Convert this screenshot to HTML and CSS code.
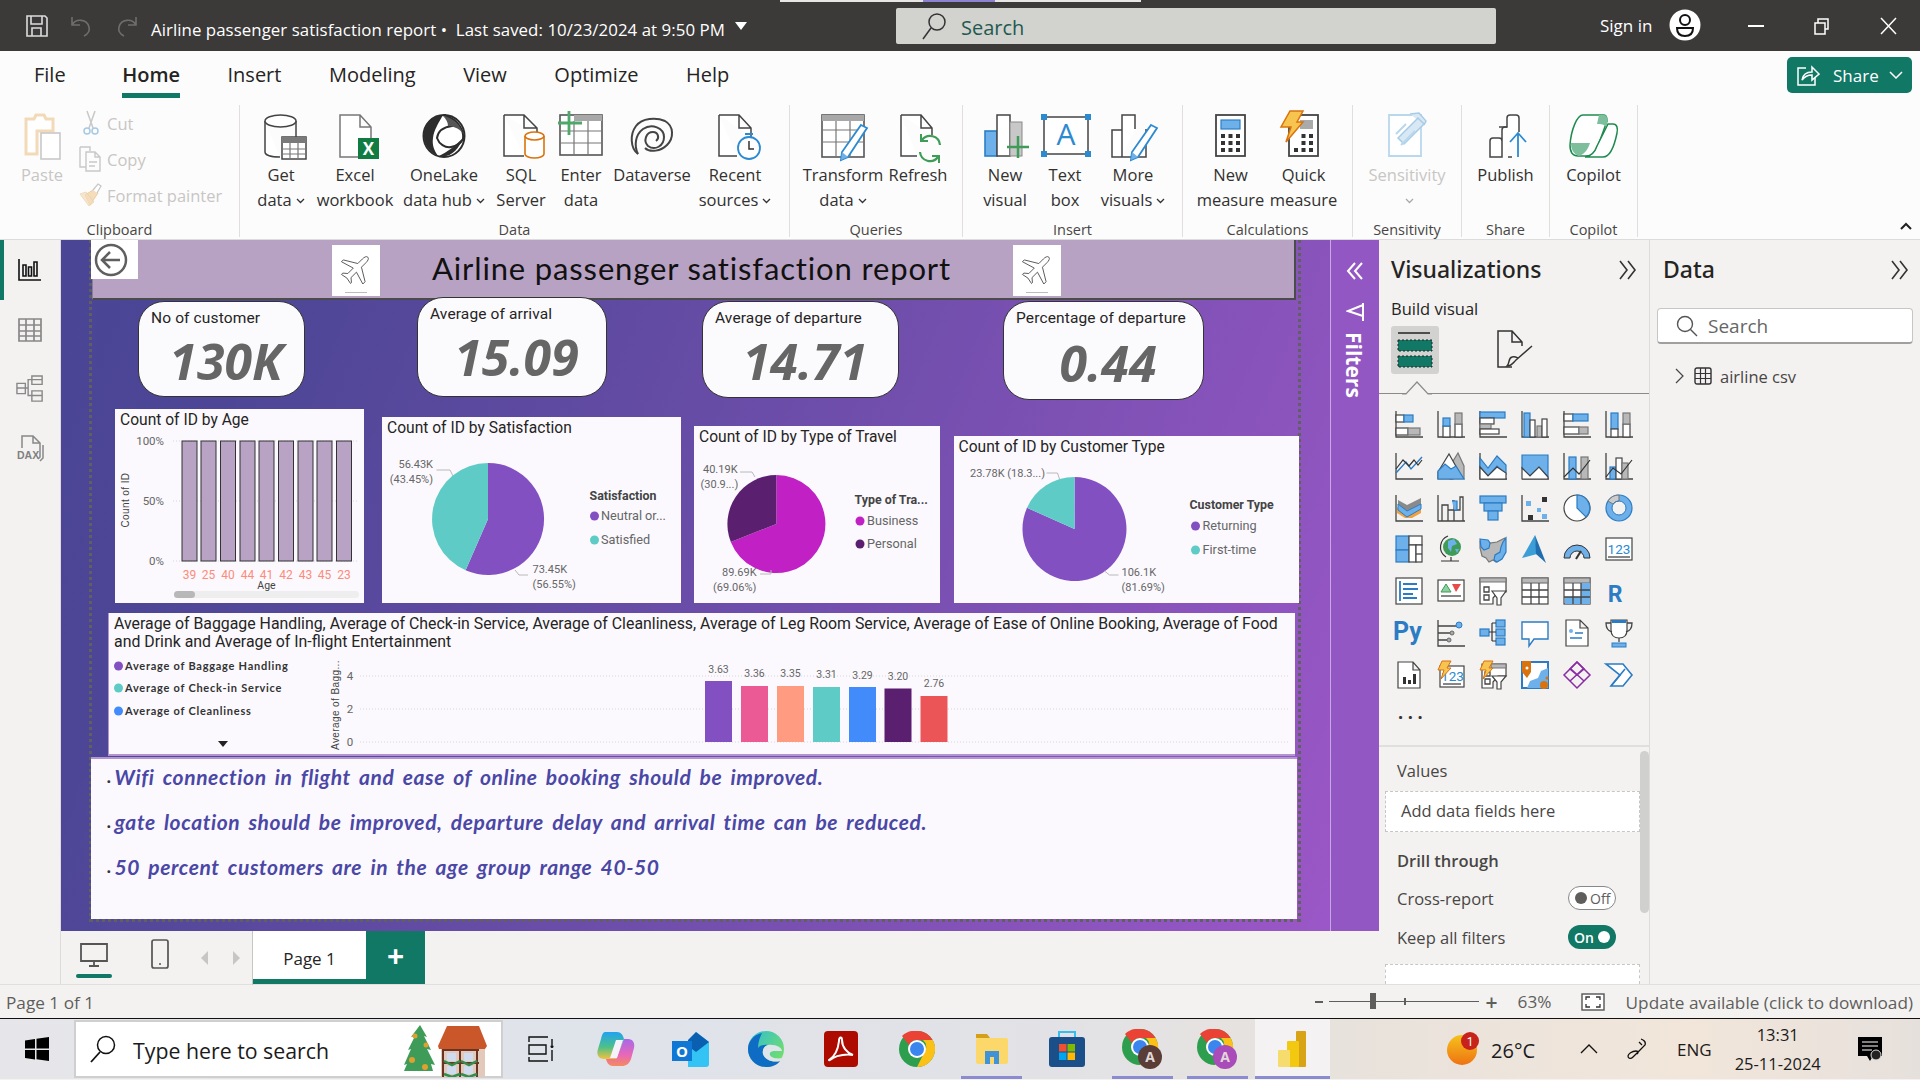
FILE: index.html
```html
<!DOCTYPE html>
<html lang="en">
<head>
<meta charset="utf-8">
<title>Airline passenger satisfaction report</title>
<link rel="stylesheet" href="styles.css">
</head>
<body>
<div class="app">

<header class="titlebar">
  <div class="tb-left">
    <svg class="tb-save" width="24" height="24" viewBox="0 0 24 24"><path class="wl" d="M2 2h18l2 2v18H2zM6 2v8h11V2M7 22v-8h9v8"/></svg>
    <svg class="tb-undo" width="22" height="24" viewBox="0 0 22 24"><path class="dim" d="M2 3v8h8M2 11c4-7 15-6 17 2 1 4-1 7-5 9"/></svg>
    <svg class="tb-redo" width="22" height="24" viewBox="0 0 22 24"><path class="dim" d="M20 3v8h-8M20 11c-4-7-15-6-17 2-1 4 1 7 5 9"/></svg>
    <span class="tb-title">Airline passenger satisfaction report&nbsp;•&nbsp; Last saved: 10/23/2024 at 9:50 PM</span>
    <svg class="tb-caret" width="12" height="8" viewBox="0 0 12 8"><path d="M0 0h12L6 8z" fill="#fff"/></svg>
  </div>
  <div class="tb-search">
    <svg width="26" height="28" viewBox="0 0 26 28"><circle cx="16" cy="10" r="8" class="dk"/><path class="dk" d="M10 16L2 27"/></svg>
    <span>Search</span>
  </div>
  <div class="tb-right">
    <span class="tb-sign">Sign in</span>
    <svg class="tb-avatar" width="32" height="32" viewBox="0 0 32 32"><circle cx="16" cy="16" r="15.5" fill="#fff"/><circle cx="16" cy="11" r="5" fill="none" stroke="#111" stroke-width="2"/><path d="M8 19h16c0 6-3 8-8 8s-8-2-8-8z" fill="none" stroke="#111" stroke-width="2"/></svg>
    <svg class="tb-min" width="16" height="4" viewBox="0 0 16 4"><path d="M0 2h16" stroke="#fff" stroke-width="2"/></svg>
    <svg class="tb-rest" width="16" height="18" viewBox="0 0 16 18"><path d="M1 6h10v11H1zM4 6V2h10v10h-3" fill="none" stroke="#fff" stroke-width="1.5"/></svg>
    <svg class="tb-close" width="17" height="18" viewBox="0 0 17 18"><path d="M1 1l15 16M16 1L1 17" stroke="#fff" stroke-width="1.5"/></svg>
  </div>
</header>
<div class="topstrip"><span></span></div>

<section class="ribbon">
  <nav class="tabs">
    <span class="tab">File</span>
    <span class="tab home">Home</span>
    <span class="tab">Insert</span>
    <span class="tab">Modeling</span>
    <span class="tab">View</span>
    <span class="tab">Optimize</span>
    <span class="tab">Help</span>
    <button class="share">
      <svg width="24" height="22" viewBox="0 0 24 22"><path d="M10 4H2v17h17v-7" fill="none" stroke="#fff" stroke-width="1.5"/><path d="M6 16c1-6 5-8 10-8V3l7 7-7 6v-5c-4 0-7 1-10 5z" fill="none" stroke="#fff" stroke-width="1.5"/></svg>
      <span>Share</span>
      <svg width="14" height="8" viewBox="0 0 14 8"><path d="M1 1l6 6 6-6" fill="none" stroke="#fff" stroke-width="1.5"/></svg>
    </button>
  </nav>
  <div class="groups">

    <div class="rgroup g-clip">
      <div class="rrow">
        <div class="rb w-paste dis">
          <svg width="50" height="50" viewBox="0 0 50 50"><path d="M6 7h8l2-4h8l2 4h7v12H17v23H6z" fill="#fff" stroke="#f2d9b8" stroke-width="3"/><rect x="21" y="21" width="19" height="26" fill="#fff" stroke="#c8c8c8" stroke-width="1.6"/></svg>
          <span class="rl">Paste</span>
        </div>
        <div class="clip-col dis">
          <div class="clip-item"><svg width="24" height="26" viewBox="0 0 24 26"><path d="M9 1l6 17M17 1l-6 17" stroke="#c8c8c8" stroke-width="1.5"/><circle cx="9" cy="21" r="3" fill="none" stroke="#a8c8e4" stroke-width="1.5"/><circle cx="17" cy="21" r="3" fill="none" stroke="#a8c8e4" stroke-width="1.5"/></svg><span>Cut</span></div>
          <div class="clip-item"><svg width="24" height="26" viewBox="0 0 24 26"><path d="M2 1h10v4M8 6h9l5 5v14H8zM2 1v20h6M17 6v5h5M11 16h8M11 20h6" fill="none" stroke="#c8c8c8" stroke-width="1.4"/></svg><span>Copy</span></div>
          <div class="clip-item"><svg width="24" height="26" viewBox="0 0 24 26"><path d="M15 8L7 13l5 10 8-12z" fill="#f5ddbc" stroke="#e8cfa8"/><path d="M2 12l6-2 8 10-5 4z" fill="#f5ddbc" stroke="#e8cfa8" opacity=".7"/><path d="M15 8l5-6 3 2-4 7" fill="#fff" stroke="#c8c8c8" stroke-width="1.3"/></svg><span>Format painter</span></div>
        </div>
      </div>
      <div class="glabel">Clipboard</div>
    </div>

    <div class="rgroup g-data">
      <div class="rrow">
        <div class="rb w70">
          <svg width="50" height="50" viewBox="0 0 50 50"><path class="ro" d="M9 9v31c0 3 6 5 15 5M40 9v16"/><ellipse class="ro" cx="24.500" cy="9" rx="15.500" ry="6"/><rect x="26" y="25" width="24" height="22" fill="#fff" stroke="#444" stroke-width="1.5"/><rect x="26" y="25" width="24" height="6" fill="#7a7a7a"/><path class="ro1" d="M26 37h24M26 42h24M34 31v16M42 31v16"/></svg>
          <span class="rl">Get</span><span class="rl">data<svg class="chev" width="9" height="6" viewBox="0 0 9 6"><path d="M1 1l3.500 3.500L8 1" fill="none" stroke="#333" stroke-width="1.3"/></svg></span>
        </div>
        <div class="rb w78">
          <svg width="50" height="50" viewBox="0 0 50 50"><path class="rg" d="M10 3h20l11 12v30H10zM30 3v12h11"/><rect x="28" y="26" width="21" height="21" fill="#107c41"/><text x="38.500" y="43" class="xl">X</text></svg>
          <span class="rl">Excel</span><span class="rl">workbook</span>
        </div>
        <div class="rb w100">
          <svg width="50" height="50" viewBox="0 0 50 50"><ellipse cx="25" cy="24" rx="20.500" ry="21" fill="#fff" stroke="#2d2d2d" stroke-width="2"/><path d="M24 3C10 4 3 15 5 26c1 8 6 14 14 18-4-6-6-11-5-18 1-8 5-14 10-23z" fill="#2d2d2d"/><path d="M25 3c5 2 8 6 8 11-8 1-14 5-15 12 2 6 8 10 14 9 6-1 10-4 12-8 1-7-3-19-19-24z" fill="#fff" stroke="#2d2d2d" stroke-width="2"/><path d="M24 4c8 1 16 7 20 17-5-5-10-7-15-7 0-4-2-7-5-10z" fill="#555"/><path d="M20 44c8-4 16-10 23-17-2 9-12 20-23 17z" fill="#2d2d2d"/></svg>
          <span class="rl">OneLake</span><span class="rl">data hub<svg class="chev" width="9" height="6" viewBox="0 0 9 6"><path d="M1 1l3.500 3.500L8 1" fill="none" stroke="#333" stroke-width="1.3"/></svg></span>
        </div>
        <div class="rb w54">
          <svg width="50" height="50" viewBox="0 0 50 50"><path class="ro" d="M8 3h20l13 13v6M8 3v41h20M28 3v13h13"/><path d="M29 24v18c0 2 4 4 9.500 4s9.500-2 9.500-4V24" fill="#fff" stroke="#d9730d" stroke-width="1.6"/><ellipse cx="38.500" cy="24" rx="9.500" ry="4" fill="#fff" stroke="#d9730d" stroke-width="1.6"/></svg>
          <span class="rl">SQL</span><span class="rl">Server</span>
        </div>
        <div class="rb w66">
          <svg width="50" height="50" viewBox="0 0 50 50"><rect x="4" y="3" width="42" height="40" fill="#fff" stroke="#555" stroke-width="1.6"/><rect x="18" y="3" width="28" height="6" fill="#a8a8a8"/><path class="ro1" d="M4 19h42M4 31h42M18 9v34M32 9v34"/><path d="M13 -1v24M2 11h24" stroke="#4fa86a" stroke-width="2.800"/></svg>
          <span class="rl">Enter</span><span class="rl">data</span>
        </div>
        <div class="rb w76">
          <svg width="50" height="50" viewBox="0 0 50 50"><path d="M11 42C3 36 3 22 9 14c6-8 20-9 29-5 9 5 9 17 2 24-6 6-17 8-22 3" fill="none" stroke="#444" stroke-width="2"/><path d="M11 42c-4-8-3-19 5-25 9-6 21-1 21 8s-9 14-16 9c-5-5-2-14 5-14 5 0 7 6 3 9" fill="none" stroke="#444" stroke-width="2"/></svg>
          <span class="rl">Dataverse</span>
        </div>
        <div class="rb w90">
          <svg width="50" height="50" viewBox="0 0 50 50"><path class="ro" d="M9 3h20l12 13v9M9 3v41h18M29 3v13h12"/><circle cx="39" cy="36" r="11" fill="#fff" stroke="#2c8ad1" stroke-width="1.800"/><path d="M39 29v8h5" fill="none" stroke="#333" stroke-width="1.500"/><path d="M35 22h8" stroke="#2c8ad1" stroke-width="2"/></svg>
          <span class="rl">Recent</span><span class="rl">sources<svg class="chev" width="9" height="6" viewBox="0 0 9 6"><path d="M1 1l3.500 3.500L8 1" fill="none" stroke="#333" stroke-width="1.3"/></svg></span>
        </div>
      </div>
      <div class="glabel">Data</div>
    </div>

    <div class="rgroup g-query">
      <div class="rrow">
        <div class="rb w86">
          <svg width="50" height="50" viewBox="0 0 50 50"><rect x="4" y="3" width="42" height="42" fill="#fff" stroke="#555" stroke-width="1.6"/><rect x="4" y="3" width="42" height="6" fill="#a8a8a8"/><path class="ro1" d="M4 18h42M4 30h42M18 9v36M32 9v36"/><path d="M43 13l6 3-19 29-7 3 1-8z" fill="#fff" stroke="#2c8ad1" stroke-width="1.800"/><path d="M24 40l6 5-7 3z" fill="#6db0ea"/></svg>
          <span class="rl">Transform</span><span class="rl">data<svg class="chev" width="9" height="6" viewBox="0 0 9 6"><path d="M1 1l3.500 3.500L8 1" fill="none" stroke="#333" stroke-width="1.3"/></svg></span>
        </div>
        <div class="rb w64">
          <svg width="50" height="50" viewBox="0 0 50 50"><path class="ro" d="M8 3h20l11 13v7M8 3v41h16M28 3v13h11"/><path d="M47 33a10 10 0 0 0-18-5M27 40a10 10 0 0 0 18 5" fill="none" stroke="#3e9b58" stroke-width="2.200"/><path d="M28 22v7h7M46 51v-7h-7" fill="none" stroke="#3e9b58" stroke-width="2"/></svg>
          <span class="rl">Refresh</span>
        </div>
      </div>
      <div class="glabel">Queries</div>
    </div>

    <div class="rgroup g-insert">
      <div class="rrow">
        <div class="rb w60">
          <svg width="50" height="50" viewBox="0 0 50 50"><rect x="5" y="19" width="12" height="25" fill="#6db0ea" stroke="#2c7fc6" stroke-width="1.600"/><rect x="17" y="3" width="13" height="41" fill="#fff" stroke="#444" stroke-width="1.500"/><rect x="30" y="10" width="12" height="34" fill="#c8c8c8" stroke="#888"/><path d="M38 24v22M27 35h22" stroke="#3e9b58" stroke-width="2.500"/></svg>
          <span class="rl">New</span><span class="rl">visual</span>
        </div>
        <div class="rb w60">
          <svg width="50" height="50" viewBox="0 0 50 50"><rect x="4" y="5" width="44" height="37" fill="#fff" stroke="#444" stroke-width="1.500"/><path d="M1 2h6v6H1zM45 2h6v6h-6zM1 39h6v6H1zM45 39h6v6h-6z" fill="#2c8ad1"/><text x="26" y="33" class="tbx">A</text></svg>
          <span class="rl">Text</span><span class="rl">box</span>
        </div>
        <div class="rb w76">
          <svg width="50" height="50" viewBox="0 0 50 50"><path class="ro" d="M4 18h10v27H4zM14 45V3h13v14M14 45h10M38 17v28h-8"/><path d="M43 13l6 3-19 29-7 3 1-8z" fill="#fff" stroke="#2c8ad1" stroke-width="1.800"/><path d="M24 40l6 5-7 3z" fill="#6db0ea"/></svg>
          <span class="rl">More</span><span class="rl">visuals<svg class="chev" width="9" height="6" viewBox="0 0 9 6"><path d="M1 1l3.500 3.500L8 1" fill="none" stroke="#333" stroke-width="1.3"/></svg></span>
        </div>
      </div>
      <div class="glabel">Insert</div>
    </div>

    <div class="rgroup g-calc">
      <div class="rrow">
        <div class="rb w73">
          <svg width="50" height="50" viewBox="0 0 50 50"><rect x="10" y="3" width="29" height="41" fill="#fff" stroke="#444" stroke-width="1.800"/><rect x="15" y="8" width="19" height="9" fill="#6db0ea" stroke="#2c7fc6" stroke-width="1.200"/><path class="keys" d="M15 22h4v4h-4zM22.500 22h4v4h-4zM30 22h4v4h-4zM15 29h4v4h-4zM22.500 29h4v4h-4zM30 29h4v4h-4zM15 36h4v4h-4zM22.500 36h4v4h-4zM30 36h4v4h-4z"/></svg>
          <span class="rl">New</span><span class="rl">measure</span>
        </div>
        <div class="rb w73">
          <svg width="50" height="50" viewBox="0 0 50 50"><rect x="10" y="3" width="29" height="41" fill="#fff" stroke="#444" stroke-width="1.800"/><rect x="21" y="8" width="13" height="9" fill="#aaa"/><path class="keys" d="M22.500 22h4v4h-4zM30 22h4v4h-4zM22.500 29h4v4h-4zM30 29h4v4h-4zM15 36h4v4h-4zM22.500 36h4v4h-4zM30 36h4v4h-4z"/><path d="M11 -1h13l-6 11h6L7 30l5-15H2z" fill="#f6c44f" stroke="#d9730d" stroke-width="1.500"/></svg>
          <span class="rl">Quick</span><span class="rl">measure</span>
        </div>
      </div>
      <div class="glabel">Calculations</div>
    </div>

    <div class="rgroup g-sens">
      <div class="rrow">
        <div class="rb w-full dis">
          <svg width="50" height="50" viewBox="0 0 50 50"><path d="M7 3h32v41H7z" fill="#fff" stroke="#b8d8ee" stroke-width="1.800"/><path d="M16 26L36 6l6 6-20 20zM28 2l9-1 7 8-2 4" fill="#d8e8f4" stroke="#a8cce6" stroke-width="1.500"/><path d="M14 22l10-10M19 33l14-14" stroke="#b8d8ee" stroke-width="2"/></svg>
          <span class="rl">Sensitivity</span><span class="rl"><svg class="chev" width="9" height="6" viewBox="0 0 9 6"><path d="M1 1l3.500 3.500L8 1" fill="none" stroke="#aaa" stroke-width="1.300"/></svg></span>
        </div>
      </div>
      <div class="glabel">Sensitivity</div>
    </div>

    <div class="rgroup g-share">
      <div class="rrow">
        <div class="rb w-full">
          <svg width="50" height="50" viewBox="0 0 50 50"><path class="ro" d="M9 29c0-2 1-3 3-3h6c2 0 3 1 3 3v16H9zM21 45V18c0-2 1-3 3-3h2V6c0-2 1-3 3-3h6c2 0 3 1 3 3v14"/><path d="M27 45h4M18 15h8" stroke="#444" fill="none" stroke-width="1.600"/><path d="M37 45V21M29 30l8-9 8 9" fill="none" stroke="#2c8ad1" stroke-width="1.800"/></svg>
          <span class="rl">Publish</span>
        </div>
      </div>
      <div class="glabel">Share</div>
    </div>

    <div class="rgroup g-copilot">
      <div class="rrow">
        <div class="rb w-full">
          <svg width="50" height="50" viewBox="0 0 50 50"><path d="M14 3h21c3 0 3 4 3 6l-9 25c-2 7-5 10-12 10H9c-5 0-8-4-8-11C2 18 8 3 14 3z" fill="#fff" stroke="#1f8a4f" stroke-width="1.500"/><path d="M39 12h5c4 0 5 4 4 9-2 10-6 24-14 24H16c7-1 10-5 12-11z" fill="#fff" stroke="#1f8a4f" stroke-width="1.500"/><path d="M30 3h5c3 0 4 3 3 9l-1 3c-2-3-5-3-9-3z" fill="#7dbf9c"/><path d="M12 31h9c-2 6-5 11-11 13-6-2-8-7-8-13h10z" fill="#7dbf9c"/></svg>
          <span class="rl">Copilot</span>
        </div>
      </div>
      <div class="glabel">Copilot</div>
    </div>

    <div class="collapse"><svg width="12" height="8" viewBox="0 0 12 8"><path d="M1 7l5-5 5 5" fill="none" stroke="#222" stroke-width="2"/></svg></div>
  </div>
</section>

<main class="main">
  <aside class="rail">
    <div class="rail-item on"><svg width="24" height="24" viewBox="0 0 24 24"><path d="M1 1v21h22M5 18V7h3v11zM10.500 18V9h3v9zM16 18V4h3v14z" fill="none" stroke="#111" stroke-width="1.600"/></svg></div>
    <div class="rail-item"><svg width="26" height="26" viewBox="0 0 26 26"><path d="M2 2h22v22H2zM2 8h22M2 14h22M2 19h22M9 2v22M17 2v22" fill="none" stroke="#888" stroke-width="1.700"/></svg></div>
    <div class="rail-item"><svg width="28" height="28" viewBox="0 0 30 30"><path d="M1 9h9v11H1zM1 14h9M17 1h11v9H17zM17 5h11M17 17h11v11H17zM17 22h11M10 14h3V5h4M13 14v8h4" fill="none" stroke="#888" stroke-width="1.500"/></svg></div>
    <div class="rail-item"><svg width="30" height="28" viewBox="0 0 30 28"><path d="M7 14V2h11l7 7v14l-2 2M18 2v7h7M28 11v13l-3 3" fill="none" stroke="#888" stroke-width="1.500"/><text x="2" y="25" class="daxt">DAX</text></svg></div>
  </aside>

  <div class="center">
    <div class="canvas-row">
      <div class="canvas">
        <div class="guide"></div>

        <div class="v-header">
          <h1>Airline passenger satisfaction report</h1>
        </div>
        <div class="v-back"><svg width="34" height="34" viewBox="0 0 34 34"><circle cx="17" cy="17" r="15" fill="none" stroke="#5f5f5f" stroke-width="2.500"/><path d="M26 17H9M16 9l-8 8 8 8" fill="none" stroke="#5f5f5f" stroke-width="2.500"/></svg></div>
        <div class="v-plane p1"><svg width="36" height="36" viewBox="0 0 28 28"><g transform="rotate(45 14 14)"><path class="plane" d="M14 1c1.500 0 2 2 2 4v5l10 6v2.500l-10-3v6l3 2.500V25l-5-1-5 1v-1.500l3-2.500v-6l-10 3V16l10-6V5c0-2 .5-4 2-4z"/></g></svg><i></i></div>
        <div class="v-plane p2"><svg width="36" height="36" viewBox="0 0 28 28"><g transform="rotate(45 14 14)"><path class="plane" d="M14 1c1.500 0 2 2 2 4v5l10 6v2.500l-10-3v6l3 2.500V25l-5-1-5 1v-1.500l3-2.500v-6l-10 3V16l10-6V5c0-2 .5-4 2-4z"/></g></svg><i></i></div>

        <div class="v-card c1"><div class="c-label">No of customer</div><div class="c-value">130K</div></div>
        <div class="v-card c2"><div class="c-label">Average of arrival</div><div class="c-value">15.09</div></div>
        <div class="v-card c3"><div class="c-label">Average of departure</div><div class="c-value">14.71</div></div>
        <div class="v-card c4"><div class="c-label">Percentage of departure</div><div class="c-value c-up">0.44</div></div>

        <div class="v-chart ch-a">
          <div class="v-title">Count of ID by Age</div>
          <svg class="chart-svg" viewBox="115 409 249 194" width="249" height="194">
            <text class="t-axis" transform="rotate(-90 129 500)" x="129" y="500" text-anchor="middle">Count of ID</text>
            <text class="t-tick" x="164" y="445" text-anchor="end">100%</text>
            <text class="t-tick" x="164" y="505" text-anchor="end">50%</text>
            <text class="t-tick" x="164" y="565" text-anchor="end">0%</text>
            <path class="grid" d="M173 441H358M173 501H358M173 561H358"/>
            <g class="bars">
              <rect x="182" y="441" width="15" height="120"/><rect x="201" y="441" width="15" height="120"/><rect x="220.500" y="441" width="15" height="120"/><rect x="240" y="441" width="15" height="120"/><rect x="259" y="441" width="15" height="120"/><rect x="278.500" y="441" width="15" height="120"/><rect x="298" y="441" width="15" height="120"/><rect x="317" y="441" width="15" height="120"/><rect x="336.500" y="441" width="15" height="120"/>
            </g>
            <g class="t-age">
              <text x="189.500" y="579">39</text><text x="208.500" y="579">25</text><text x="228" y="579">40</text><text x="247.500" y="579">44</text><text x="266.500" y="579">41</text><text x="286" y="579">42</text><text x="305.500" y="579">43</text><text x="324.500" y="579">45</text><text x="344" y="579">23</text>
            </g>
            <text class="t-axis2" x="266.500" y="589" text-anchor="middle">Age</text>
            <rect x="174" y="591" width="185" height="7" rx="3.500" fill="#eeeeee"/>
            <rect x="174" y="591" width="21" height="7" rx="3.500" fill="#b8b8b8"/>
          </svg>
        </div>

        <div class="v-chart ch-b">
          <div class="v-title">Count of ID by Satisfaction</div>
          <svg class="chart-svg" viewBox="382 417 299 186" width="299" height="186">
            <path d="M488 519V463A56 56 0 1 1 465.600 570.300z" fill="#8350c2"/>
            <path d="M488 519L465.600 570.300A56 56 0 0 1 488 463z" fill="#5fcbc6"/>
            <path class="leader" d="M436.500 470H450L453 476M515 570L519 575H528"/>
            <text class="t-lab" x="433" y="468" text-anchor="end">56.43K</text>
            <text class="t-lab" x="433" y="483" text-anchor="end">(43.45%)</text>
            <text class="t-lab" x="532.500" y="573">73.45K</text>
            <text class="t-lab" x="532.500" y="588">(56.55%)</text>
            <text class="t-leg" x="589.500" y="500">Satisfaction</text>
            <circle cx="594.500" cy="516" r="4.500" fill="#8350c2"/><text class="t-ent" x="601" y="520">Neutral or...</text>
            <circle cx="594.500" cy="540" r="4.500" fill="#5fcbc6"/><text class="t-ent" x="601" y="544">Satisfied</text>
          </svg>
        </div>

        <div class="v-chart ch-c">
          <div class="v-title">Count of ID by Type of Travel</div>
          <svg class="chart-svg" viewBox="694 426 246 177" width="246" height="177">
            <path d="M776.400 524V475A49 49 0 1 1 730.800 541.900z" fill="#c020c4"/>
            <path d="M776.400 524L730.800 541.900A49 49 0 0 1 776.400 475z" fill="#5b1f70"/>
            <path class="leader" d="M740 472H752L755 477M760 574H771V570"/>
            <text class="t-lab" x="703" y="473">40.19K</text>
            <text class="t-lab" x="700.500" y="488">(30.9...)</text>
            <text class="t-lab" x="722" y="576">89.69K</text>
            <text class="t-lab" x="713" y="591">(69.06%)</text>
            <text class="t-leg" x="854.500" y="504">Type of Tra...</text>
            <circle cx="860" cy="521" r="4.500" fill="#c020c4"/><text class="t-ent" x="867" y="525">Business</text>
            <circle cx="860" cy="544" r="4.500" fill="#5b1f70"/><text class="t-ent" x="867" y="548">Personal</text>
          </svg>
        </div>

        <div class="v-chart ch-d">
          <div class="v-title">Count of ID by Customer Type</div>
          <svg class="chart-svg" viewBox="953.500 436 345.500 167" width="345.500" height="167">
            <path d="M1074 529V477A52 52 0 1 1 1026.500 507.800z" fill="#8350c2"/>
            <path d="M1074 529L1026.500 507.800A52 52 0 0 1 1074 477z" fill="#5fcbc6"/>
            <path class="leader" d="M1046 473H1057L1059 479M1104 571L1109 575H1118"/>
            <text class="t-lab" x="969.500" y="477">23.78K (18.3...)</text>
            <text class="t-lab" x="1121" y="576">106.1K</text>
            <text class="t-lab" x="1121" y="591">(81.69%)</text>
            <text class="t-leg" x="1189" y="509">Customer Type</text>
            <circle cx="1195" cy="526" r="4.500" fill="#8350c2"/><text class="t-ent" x="1202" y="530">Returning</text>
            <circle cx="1195" cy="550" r="4.500" fill="#5fcbc6"/><text class="t-ent" x="1202" y="554">First-time</text>
          </svg>
        </div>

        <div class="v-chart ch-e">
          <div class="v-title wrap">Average of Baggage Handling, Average of Check-in Service, Average of Cleanliness, Average of Leg Room Service, Average of Ease of Online Booking, Average of Food and Drink and Average of In-flight Entertainment</div>
          <svg class="chart-svg" viewBox="108 613 1187 143" width="1187" height="143">
            <circle cx="118.500" cy="666" r="4.500" fill="#8350c2"/><text class="t-el" x="125" y="670">Average of Baggage Handling</text>
            <circle cx="118.500" cy="688" r="4.500" fill="#5fcbc6"/><text class="t-el" x="125" y="692">Average of Check-in Service</text>
            <circle cx="118.500" cy="711" r="4.500" fill="#428bfb"/><text class="t-el" x="125" y="715">Average of Cleanliness</text>
            <path d="M218 741h10l-5 6z" fill="#222"/>
            <text class="t-axis" transform="rotate(-90 339 705)" x="339" y="705" text-anchor="middle">Average of Bagg...</text>
            <text class="t-tick" x="350" y="680" text-anchor="middle">4</text><text class="t-tick" x="350" y="713" text-anchor="middle">2</text><text class="t-tick" x="350" y="746" text-anchor="middle">0</text>
            <path class="grid" d="M360 676H1290M360 709H1290M360 742H1290"/>
            <rect x="705" y="681" width="27" height="61" fill="#8350c2"/>
            <rect x="741" y="686" width="27" height="56" fill="#ec5a96"/>
            <rect x="777" y="686" width="27" height="56" fill="#fe9b80"/>
            <rect x="813" y="687" width="27" height="55" fill="#5fcbc6"/>
            <rect x="849" y="687" width="27" height="55" fill="#428bfb"/>
            <rect x="884.500" y="688.500" width="27" height="53.500" fill="#5b1f70"/>
            <rect x="920.500" y="696" width="27" height="46" fill="#ec5558"/>
            <g class="t-val">
              <text x="718.500" y="673">3.63</text><text x="754.500" y="677">3.36</text><text x="790.500" y="677">3.35</text><text x="826.500" y="678">3.31</text><text x="862.500" y="679">3.29</text><text x="898" y="680">3.20</text><text x="934" y="687">2.76</text>
            </g>
          </svg>
        </div>

        <div class="v-text">
          <p><b>.</b><em>Wifi connection in flight and ease of online booking should be improved.</em></p>
          <p><b>.</b><em>gate location should be improved, departure delay and arrival time can be reduced.</em></p>
          <p><b>.</b><em>50 percent customers are in the age group range 40-50</em></p>
        </div>
      </div>

      <aside class="filters">
        <svg class="f-coll" width="18" height="18" viewBox="0 0 18 18"><path d="M9 1L2 9l7 8M16 1L9 9l7 8" fill="none" stroke="#fff" stroke-width="2"/></svg>
        <svg class="f-ic" width="18" height="20" viewBox="0 0 18 20"><path d="M17 1v18M17 3L2 9l15 5" fill="none" stroke="#fff" stroke-width="2"/></svg>
        <span class="f-text">Filters</span>
      </aside>
    </div>

    <div class="pagebar">
      <div class="pb-icons">
        <div class="pb-desk"><svg width="28" height="24" viewBox="0 0 28 24"><path d="M1 1h26v17H1zM14 18v4M9 23h10" fill="none" stroke="#555" stroke-width="1.800"/></svg></div>
        <svg class="pb-phone" width="18" height="30" viewBox="0 0 18 30"><rect x="1" y="1" width="16" height="28" rx="2" fill="none" stroke="#555" stroke-width="1.700"/><path d="M8 25h2" stroke="#555" stroke-width="1.500"/></svg>
        <svg class="pb-arr" width="7" height="14" viewBox="0 0 7 14"><path d="M7 0L0 7l7 7z" fill="#c8c6c4"/></svg>
        <svg class="pb-arr2" width="7" height="14" viewBox="0 0 7 14"><path d="M0 0l7 7-7 7z" fill="#c8c6c4"/></svg>
      </div>
      <div class="pb-tab">Page 1</div>
      <div class="pb-add">+</div>
    </div>
  </div>

  <aside class="viz">
    <div class="pane-head"><h2>Visualizations</h2><svg width="18" height="20" viewBox="0 0 18 20"><path d="M1 1l7 9-7 9M9 1l7 9-7 9" fill="none" stroke="#333" stroke-width="1.600"/></svg></div>
    <div class="bv">Build visual</div>
    <div class="bv-tabs">
      <div class="bv-sel"><svg width="38" height="36" viewBox="0 0 38 36"><path d="M2 1h32" stroke="#222" stroke-width="1.500"/><rect x="2" y="8" width="34" height="11" fill="#117865" stroke="#222" stroke-dasharray="2 2"/><rect x="2" y="24" width="34" height="11" fill="#117865" stroke="#222" stroke-dasharray="2 2"/></svg></div>
      <svg class="bv-fmt" width="38" height="38" viewBox="0 0 38 38"><path d="M16 37H2V1h14l10 11v4M16 1v11h10" fill="none" stroke="#333" stroke-width="1.500"/><path d="M36 16L20 30c-3 3-4 6-9 6 3-3 1-8 5-9 3-1 4 0 6 1" fill="none" stroke="#333" stroke-width="1.500"/></svg>
    </div>
    <div class="notch"><svg width="30" height="14" viewBox="0 0 30 14"><path d="M0 13h4L15 1l11 12h4" fill="#f3f2f1" stroke="#8a8a8a" stroke-width="1.200"/></svg></div>

    <div class="viz-grid">
      <svg class="vi" viewBox="0 0 28 28"><path class="o" d="M1 1v26h27"/><rect class="w" x="1" y="5" width="8" height="7"/><rect class="b" x="9" y="5" width="9" height="7"/><rect class="w" x="1" y="18" width="12" height="7"/><rect class="g" x="13" y="18" width="12" height="7"/></svg>
      <svg class="vi" viewBox="0 0 28 28"><path class="o" d="M1 1v26h27"/><rect class="w" x="6" y="16" width="7" height="11"/><rect class="b" x="6" y="8" width="7" height="8"/><rect class="w" x="18" y="14" width="7" height="13"/><rect class="g" x="18" y="3" width="7" height="11"/></svg>
      <svg class="vi" viewBox="0 0 28 28"><path class="o" d="M1 1v26h27"/><rect class="b" x="1" y="2" width="25" height="6"/><rect class="w" x="1" y="8" width="14" height="6"/><rect class="g" x="1" y="14" width="11" height="5"/><rect class="w" x="1" y="19" width="19" height="5"/></svg>
      <svg class="vi" viewBox="0 0 28 28"><path class="o" d="M1 1v26h27"/><rect class="b" x="3" y="3" width="6" height="24"/><rect class="w" x="9" y="10" width="5" height="17"/><rect class="g" x="16" y="16" width="5" height="11"/><rect class="w" x="21" y="9" width="5" height="18"/></svg>
      <svg class="vi" viewBox="0 0 28 28"><path class="o" d="M1 1v26h27"/><rect class="w" x="1" y="4" width="9" height="7"/><rect class="b" x="10" y="4" width="15" height="7"/><rect class="w" x="1" y="17" width="15" height="7"/><rect class="g" x="16" y="17" width="9" height="7"/></svg>
      <svg class="vi" viewBox="0 0 28 28"><path class="o" d="M1 1v26h27"/><rect class="b" x="6" y="3" width="7" height="16"/><rect class="w" x="6" y="19" width="7" height="8"/><rect class="w" x="18" y="14" width="7" height="13"/><rect class="g" x="18" y="3" width="7" height="11"/></svg>

      <svg class="vi" viewBox="0 0 28 28"><path class="o" d="M1 1v26h27"/><path class="thb" d="M1 21L11 10l5 7 11-12"/><path class="th" d="M1 17L8 8l6 6 5-6 4 5 4-5"/></svg>
      <svg class="vi" viewBox="0 0 28 28"><path class="g" d="M13 14L21 1l6 13v13H13z"/><path class="w" d="M1 20L12 2l9 16-5 9H1z"/><path class="b" d="M1 27v-8l7-7 6 5 5-3 8 13z"/></svg>
      <svg class="vi" viewBox="0 0 28 28"><path class="o" d="M1 1v26h27"/><path class="b" d="M1 6l8 10 9-12 9 9v9l-9-8-9 10-8-9z"/><path class="w" d="M1 15l8 9 9-9 9 6v6H1z"/></svg>
      <svg class="vi" viewBox="0 0 28 28"><path class="o" d="M1 27h27"/><path class="b" d="M1 3h26v22L18 15l-9 9-8-8z"/><path class="w" d="M1 16l8 8 9-9 9 10v2H1z"/></svg>
      <svg class="vi" viewBox="0 0 28 28"><path class="o" d="M1 1v26h27"/><rect class="b" x="6" y="5" width="7" height="22"/><rect class="g" x="18" y="5" width="7" height="22"/><path class="th" d="M1 25l9-9 6 6 11-14"/></svg>
      <svg class="vi" viewBox="0 0 28 28"><path class="o" d="M1 1v26h27"/><rect class="b" x="5" y="15" width="6" height="12"/><rect class="w" x="11" y="6" width="6" height="21"/><rect class="g" x="17" y="11" width="6" height="16"/><path class="th" d="M1 25l7-9 8 6 11-14"/></svg>

      <svg class="vi" viewBox="0 0 28 28"><path class="o" d="M1 1v26h27"/><path d="M3 6l9 5 14-7v7l-14 8-9-6z" fill="#8a8a8a"/><path d="M2 19l8 5h7l9-5v-6l-9 7h-7l-8-7z" fill="#f0a040"/><path d="M3 10l9 7 14-7v5l-14 8-9-7z" fill="#6db0ea" stroke="#2b7cc4"/></svg>
      <svg class="vi" viewBox="0 0 28 28"><path class="o" d="M1 1v26h27"/><path class="o" d="M5 27V11h6v16M11 27V16h6V7h-2M17 27V11M17 16h6V3h3v24"/><path class="b" d="M15 7h5v9h-3"/></svg>
      <svg class="vi" viewBox="0 0 28 28"><rect class="b" x="1" y="2" width="26" height="7"/><rect class="b" x="5" y="9" width="18" height="8"/><rect class="b" x="9" y="17" width="10" height="9"/></svg>
      <svg class="vi" viewBox="0 0 28 28"><path class="o" d="M1 1v26h27"/><path d="M5 7h5v5H5zM16 14h4v4h-4zM21 20h5v5h-5z" fill="#6db0ea"/><path d="M21 3h5v5h-5zM7 21h5v5H7z" fill="#333"/></svg>
      <svg class="vi" viewBox="0 0 28 28"><circle class="w" cx="14" cy="14" r="13"/><path class="b" d="M14 14V1a13 13 0 0 1 9 22z"/></svg>
      <svg class="vi" viewBox="0 0 28 28"><circle cx="14" cy="14" r="10" fill="none" stroke="#6db0ea" stroke-width="6"/><circle cx="14" cy="14" r="13" fill="none" stroke="#2b7cc4" stroke-width="1.200"/><path d="M3 7A13 13 0 0 1 14 1v6A7 7 0 0 0 8 10z" fill="#ccc" stroke="#777"/><circle cx="14" cy="14" r="7" fill="none" stroke="#2b7cc4"/></svg>

      <svg class="vi" viewBox="0 0 28 28"><rect class="b" x="1" y="1" width="13" height="14"/><rect class="b" x="1" y="15" width="13" height="12"/><rect class="w" x="14" y="1" width="13" height="9"/><rect class="w" x="14" y="10" width="7" height="17"/><rect class="w" x="21" y="10" width="6" height="17"/><path class="o" d="M21 19h6"/></svg>
      <svg class="vi" viewBox="0 0 28 28"><circle cx="15" cy="12" r="9" fill="#3e9b58"/><path d="M11 6l6-2 3 5-5 2-1 6-3-4zM18 14h4l-2 4z" fill="#6db0ea"/><path class="th" d="M11 1C3 4 0 16 9 22M4 26h18M14 22v4"/></svg>
      <svg class="vi" viewBox="0 0 28 28"><path class="g" d="M1 6h7l3 2 7-1 8-4v14l-4 7-5 3-3-2-4 2-3-4-4-2-2-8z"/><path class="b" d="M27 3v14l-4 7-5 3-3-2 1-5 5-3 1-5 2-5zM1 4l8 1 2 3-1 5-5 2-3-3z"/></svg>
      <svg class="vi" viewBox="0 0 28 28"><path d="M14 0l2 19-15 4z" fill="#3c9ed6"/><path d="M14 0l1 19 10 9z" fill="#1f6eb0"/></svg>
      <svg class="vi" viewBox="0 0 28 28"><path d="M1 23a13 13 0 0 1 26 0h-6a7 7 0 0 0-14 0z" fill="#6db0ea" stroke="#333"/><path d="M13 24l5-8" stroke="#333" stroke-width="2"/></svg>
      <svg class="vi" viewBox="0 0 28 28"><rect class="w" x="1" y="3" width="26" height="22"/><path class="o" d="M3 22h22"/><text x="14" y="19" class="n123">123</text></svg>

      <svg class="vi" viewBox="0 0 28 28"><rect class="w" x="1" y="1" width="26" height="26"/><path d="M5 4v20M8 7h14M8 12h15M8 17h10M8 21h14" stroke="#2b7cc4" stroke-width="1.800"/></svg>
      <svg class="vi" viewBox="0 0 28 28"><rect class="w" x="1" y="3" width="26" height="21"/><path d="M4 15l5-8 5 8z" fill="#8fd0a0" stroke="#3e9b58"/><path d="M15 7h9l-5 8z" fill="#e84a4a"/><path class="o" d="M4 19h20"/></svg>
      <svg class="vi" viewBox="0 0 28 28"><path class="w" d="M1 1h26v14h-8l-5 6v6H1z"/><path class="g" d="M1 1h26v4H1z"/><path class="o" d="M5 10h5v5H5zM5 18h5v5H5z"/><path class="w" d="M13 14h14l-5 7v7h-4v-7z"/></svg>
      <svg class="vi" viewBox="0 0 28 28"><rect class="w" x="1" y="1" width="26" height="26"/><rect class="g" x="1" y="1" width="26" height="5"/><path class="o" d="M1 13h26M1 20h26M10 6v21M18 6v21"/></svg>
      <svg class="vi" viewBox="0 0 28 28"><rect class="w" x="1" y="1" width="26" height="26"/><rect class="g" x="1" y="1" width="26" height="5"/><path d="M18 6h9v21H2v-7h16z" fill="#6db0ea"/><path class="o" d="M1 13h26M1 20h26M10 6v21M18 6v21"/></svg>
      <svg class="vi" viewBox="0 0 28 28"><text x="10" y="25" class="rlet">R</text></svg>

      <svg class="vi" viewBox="0 0 28 28"><text x="-2" y="21" class="py">Py</text></svg>
      <svg class="vi" viewBox="0 0 28 28"><path class="o" d="M1 1v26h27M1 7h18M1 14h12M1 21h9"/><circle cx="22" cy="6" r="3" fill="#6db0ea" stroke="#2b7cc4"/><circle cx="15" cy="14" r="2" fill="#aaa" stroke="#666"/><circle cx="12" cy="21" r="2" fill="#aaa" stroke="#666"/></svg>
      <svg class="vi" viewBox="0 0 28 28"><rect class="b" x="1" y="10" width="9" height="7"/><rect class="b" x="17" y="1" width="9" height="7"/><rect class="b" x="17" y="10" width="9" height="7"/><rect class="b" x="17" y="19" width="9" height="7"/><path class="th" d="M10 13h7M13 4v18M13 4h4M13 22h4"/></svg>
      <svg class="vi" viewBox="0 0 28 28"><path d="M1 3h26v17H13l-5 7v-7H1z" fill="#fff" stroke="#2b7cc4" stroke-width="1.400"/></svg>
      <svg class="vi" viewBox="0 0 28 28"><path class="w" d="M3 1h14l8 8v18H3zM17 1v8h8"/><circle cx="8" cy="12" r="2" fill="#6db0ea"/><path d="M12 14h8M7 19h12" stroke="#2b7cc4" stroke-width="1.400"/></svg>
      <svg class="vi" viewBox="0 0 28 28"><path class="w" d="M6 1h16v10c0 5-3 8-8 8s-8-3-8-8z"/><path class="o" d="M6 4H1c0 5 2 8 6 9M22 4h5c0 5-2 8-6 9M14 19v4"/><rect x="7" y="1" width="14" height="3" fill="#2b7cc4"/><rect x="7" y="24" width="14" height="4" fill="#6db0ea" stroke="#2b7cc4"/></svg>

      <svg class="vi" viewBox="0 0 28 28"><path class="w" d="M3 1h15l7 8v18H3zM18 1v8h7"/><path d="M8 16h3v7H8zM13 19h3v4h-3zM18 13h3v10h-3z" fill="#333"/></svg>
      <svg class="vi" viewBox="0 0 28 28"><rect class="w" x="3" y="5" width="24" height="21"/><path class="o" d="M6 23h18"/><text x="15.500" y="20" class="n123">123</text><path d="M5 0h9l-4 7h4L4 18l3-9H1z" fill="#f6c44f" stroke="#d9730d"/></svg>
      <svg class="vi" viewBox="0 0 28 28"><path class="w" d="M3 3h24v12h-8l-5 6v6H3z"/><path class="g" d="M12 3h15v4H12z"/><path class="o" d="M6 11h5v4H6zM6 18h5v5H6z"/><path class="w" d="M13 15h14l-5 6v7h-4v-7z"/><path d="M5 0h9l-4 7h4L4 18l3-9H1z" fill="#f6c44f" stroke="#d9730d"/></svg>
      <svg class="vi" viewBox="0 0 28 28"><rect x="1" y="1" width="26" height="26" fill="#fff" stroke="#2b7cc4" stroke-width="2"/><path d="M6 27l3-7 8-3 3-7 7-3v20z" fill="#6db0ea"/><path d="M1 0h9v11l-4 6-5-6z" fill="#d9730d"/><circle cx="6" cy="7" r="1.500" fill="#fff"/><circle cx="23" cy="24" r="4" fill="#d9730d"/><circle cx="26" cy="17" r="1.500" fill="#d9730d"/></svg>
      <svg class="vi" viewBox="0 0 28 28"><path d="M14 1L27 14 14 27 1 14z" fill="none" stroke="#8a2da5" stroke-width="1.500"/><path d="M8 8l13 12M20 8L7 20M14 1l7 7-7 6-7-6z" fill="none" stroke="#8a2da5" stroke-width="1.500"/></svg>
      <svg class="vi" viewBox="0 0 28 28"><path d="M1 3h17l9 11-9 11H6l9-11z" fill="#fff" stroke="#2b7cc4" stroke-width="1.600"/><path d="M6 25L20 8" stroke="#2b7cc4" stroke-width="1.600"/></svg>
    </div>
    <div class="dots">. . .</div>

    <div class="wells">
      <div class="w-label">Values</div>
      <div class="w-box">Add data fields here</div>
      <div class="w-head">Drill through</div>
      <div class="w-row"><span>Cross-report</span><span class="tog off"><i></i>Off</span></div>
      <div class="w-row r2"><span>Keep all filters</span><span class="tog on">On<i></i></span></div>
      <div class="w-box2"></div>
      <div class="w-scroll"></div>
    </div>
  </aside>

  <aside class="data">
    <div class="pane-head dh"><h2>Data</h2><svg width="18" height="20" viewBox="0 0 18 20"><path d="M1 1l7 9-7 9M9 1l7 9-7 9" fill="none" stroke="#333" stroke-width="1.600"/></svg></div>
    <div class="d-search">
      <svg width="22" height="22" viewBox="0 0 22 22"><circle cx="9" cy="9" r="7.500" fill="none" stroke="#555" stroke-width="1.400"/><path d="M14.500 14.500L21 21" stroke="#555" stroke-width="1.400"/></svg>
      <span>Search</span>
    </div>
    <div class="d-tree">
      <svg width="9" height="16" viewBox="0 0 9 16"><path d="M1 1l7 7-7 7" fill="none" stroke="#444" stroke-width="1.200"/></svg>
      <svg width="18" height="18" viewBox="0 0 18 18"><rect x="1" y="1" width="16" height="16" rx="2" fill="none" stroke="#333" stroke-width="1.400"/><path d="M1 6.500h16M1 11.500h16M6.500 1v16M11.500 1v16" stroke="#333" stroke-width="1.200"/></svg>
      <span>airline csv</span>
    </div>
  </aside>
</main>

<footer class="status">
  <span class="st-page">Page 1 of 1</span>
  <div class="st-right">
    <span class="st-minus"></span>
    <div class="slider"><i class="thumb"></i><i class="tick"></i></div>
    <span class="st-plus">+</span>
    <span class="st-zoom">63%</span>
    <svg class="st-fit" width="24" height="18" viewBox="0 0 24 18"><rect x="1" y="1" width="22" height="16" fill="#fff" stroke="#555" stroke-width="1.400"/><path d="M5 7V4h4M15 4h4v3M19 11v3h-4M9 14H5v-3" fill="none" stroke="#333" stroke-width="1.300"/></svg>
    <span class="st-upd">Update available (click to download)</span>
  </div>
</footer>

<footer class="taskbar">
  <div class="win"><svg width="24" height="24" viewBox="0 0 24 24"><path d="M0 3.500l10-1.500v9.500H0zM11.500 1.800L24 0v11.500H11.500zM0 13h10v9.500L0 21zM11.500 13H24v11l-12.500-1.800z" fill="#000"/></svg></div>
  <div class="tsearch">
    <svg width="26" height="28" viewBox="0 0 26 28"><circle cx="16" cy="10" r="8.500" fill="none" stroke="#111" stroke-width="1.500"/><path d="M10 17L1 27" stroke="#111" stroke-width="1.800"/></svg>
    <span>Type here to search</span>
    <svg class="ts-art" width="86" height="52" viewBox="0 0 86 52">
      <path d="M17 0l7 12-3-1 7 14-4-1 8 16-4-1 2 7H1l3-7-3 1 7-16-3 1 7-14-4 1z" fill="#3e9b58"/>
      <circle cx="12" cy="11" r="2.500" fill="#e0a030"/><circle cx="23" cy="20" r="2.500" fill="#e0a030"/><circle cx="9" cy="35" r="3" fill="#e0a030"/><circle cx="22" cy="42" r="3" fill="#e0a030"/>
      <rect x="38" y="22" width="44" height="30" fill="#e3c8bc"/>
      <path d="M44 1h32l8 20-2 3H36l-1-3z" fill="#c9572a"/>
      <path d="M39 25h37M39 38h37M40 25v27M57 25v27M74 25v27" stroke="#6b3320" stroke-width="2"/>
      <path d="M44 28h9v8h-9zM61 28h9v8h-9zM44 41h9v8h-9zM61 41h9v8h-9z" fill="#cfdcf0"/>
      <path d="M41 36l8 4 8-4M58 36l8 4 8-4M41 49l8 3 8-3M58 49l8 3 8-3" fill="none" stroke="#2f8f4f" stroke-width="2.500"/>
    </svg>
  </div>
  <div class="tslots">
    <div class="slot"><svg width="26" height="28" viewBox="0 0 26 28"><path d="M7 2H1v5M1 10h17v9H1zM1 22v4h6M7 26H1M24 4v6M24 15v11M20 26h-13M7 2h13" fill="none" stroke="#111" stroke-width="1.400"/><circle cx="24" cy="11.500" r="1.500" fill="#111"/></svg></div>
    <div class="slot"><svg width="38" height="36" viewBox="0 0 38 36"><defs><linearGradient id="cpa" x1="0" y1="0" x2="0" y2="1"><stop offset="0" stop-color="#1fa3f2"/><stop offset=".55" stop-color="#4cc08a"/><stop offset="1" stop-color="#f2c23c"/></linearGradient><linearGradient id="cpb" x1="0" y1="0" x2="0" y2="1"><stop offset="0" stop-color="#a868e8"/><stop offset=".6" stop-color="#e868b8"/><stop offset="1" stop-color="#f58a5c"/></linearGradient></defs><path d="M27 8h4c5 0 7 4 6 9l-3 11c-2 5-5 7-9 7H16c-4 0-6-3-7-7h10z" fill="url(#cpb)"/><path d="M8 1h12c4 0 6 3 7 7l-8 20H7c-5 0-8-4-6-10l3-10C5 4 6 1 8 1z" fill="url(#cpa)"/><path d="M19 9h7l-6 18h-7z" fill="#f6f2fa"/></svg></div>
    <div class="slot"><svg width="38" height="36" viewBox="0 0 38 36"><path d="M24 1l13 10v22c0 2-1 3-3 3H16V12z" fill="#33c3f4"/><path d="M24 1l13 10-13 10-8-6V9z" fill="#0a5fb0"/><rect x="0" y="10" width="20" height="20" fill="#0f78d4"/><text x="10" y="26" class="ol">O</text></svg></div>
    <div class="slot"><svg width="36" height="36" viewBox="0 0 36 36"><defs><linearGradient id="eg" x1="0" y1="0" x2="1" y2=".7"><stop offset="0" stop-color="#2cbcd8"/><stop offset="1" stop-color="#72de6c"/></linearGradient></defs><circle cx="18" cy="18" r="18" fill="url(#eg)"/><path d="M14 2C5 4 0 11 0 18c0 10 8 18 18 18 6 0 11-2 14-6-7 2-15-1-17-7-1-4 1-8 5-9-3-1-8 0-10 3 0-6 2-11 4-15z" fill="#0f6cc4"/><path d="M20 14c-4 1-6 5-5 9 2 6 10 9 17 7l2-3c-5 1-11 0-12-3-1-3 2-4 5-4h7c0-3-6-7-14-6z" fill="#dfe4ea"/></svg></div>
    <div class="slot"><svg width="34" height="36" viewBox="0 0 34 36"><rect width="34" height="36" rx="4" fill="#ad0b00"/><path d="M5 29c5-3 9-10 10-19 0-4 3-5 3-1 0 7 5 13 11 15-6-1-15 0-20 3-2 1-4 3-4 2z" fill="none" stroke="#fff" stroke-width="2"/></svg></div>
    <div class="slot"><svg width="36" height="36" viewBox="0 0 36 36"><use href="#chrome"/></svg></div>
    <div class="slot open"><svg width="34" height="32" viewBox="0 0 34 32"><path d="M1 1h11l3 4h-14z" fill="#d4a017"/><rect x="1" y="5" width="32" height="26" rx="2" fill="#fcd76a"/><path d="M10 31V18h14v13h-5v-7h-4v7z" fill="#3f93d8"/></svg></div>
    <div class="slot"><svg width="36" height="36" viewBox="0 0 36 36"><rect y="6" width="36" height="30" rx="3" fill="#1b4f8a"/><path d="M10 6V1h16v5" fill="none" stroke="#33c0f0" stroke-width="2"/><rect x="10" y="13" width="7.500" height="7.500" fill="#f05030"/><rect x="18.500" y="13" width="7.500" height="7.500" fill="#7fba00"/><rect x="10" y="21.500" width="7.500" height="7.500" fill="#00a4ef"/><rect x="18.500" y="21.500" width="7.500" height="7.500" fill="#ffb900"/></svg></div>
    <div class="slot open"><svg width="40" height="40" viewBox="0 0 40 40"><use href="#chrome"/><ellipse cx="28" cy="28" rx="12" ry="12" fill="#5a3d36"/><text x="28" y="33" class="tA">A</text></svg></div>
    <div class="slot open"><svg width="40" height="40" viewBox="0 0 40 40"><use href="#chrome"/><ellipse cx="28" cy="28" rx="12" ry="12" fill="#a94bb8"/><text x="28" y="33" class="tA">A</text></svg></div>
    <div class="slot open act"><svg width="28" height="36" viewBox="0 0 28 36"><rect x="18" y="0" width="10" height="36" rx="1" fill="#d9a316"/><rect x="9" y="10" width="12" height="26" rx="1" fill="#f2c811"/><rect x="0" y="19" width="12" height="17" rx="1" fill="#f6dc6d"/></svg></div>
  </div>
  <div class="tray">
    <div class="weather"><svg width="34" height="34" viewBox="0 0 34 34"><defs><linearGradient id="wx" x1="0" y1="0" x2="0" y2="1"><stop offset="0" stop-color="#f5c21c"/><stop offset="1" stop-color="#ee7212"/></linearGradient></defs><circle cx="16" cy="18" r="15" fill="url(#wx)"/><circle cx="24" cy="9" r="9" fill="#c8231a"/><text x="24" y="13.500" class="wn">1</text></svg><span>26°C</span></div>
    <svg class="tr-chev" width="18" height="10" viewBox="0 0 18 10"><path d="M1 9l8-8 8 8" fill="none" stroke="#111" stroke-width="1.300"/></svg>
    <svg class="tr-pen" width="20" height="22" viewBox="0 0 20 22"><path d="M14 1c3 1 5 3 4 6-2 2-9 9-12 12-2 2-5 2-5-1 0-2 4-5 8-5 3 0 2 2 1 3M12 4l3 3" fill="none" stroke="#111" stroke-width="1.300"/></svg>
    <span class="tr-eng">ENG</span>
    <div class="clock"><span>13:31</span><span>25-11-2024</span></div>
    <svg class="tr-note" width="26" height="26" viewBox="0 0 26 26"><path d="M1 1h24v19h-9l-3 5-3-5H1z" fill="#000"/><path d="M5 6h16M5 10h16M5 14h10" stroke="#fff" stroke-width="1.200"/><circle cx="19" cy="19" r="5" fill="#222" stroke="#ddd"/></svg>
  </div>
</footer>
</div>

<svg class="defs" width="0" height="0" aria-hidden="true"><defs>
  <g id="chrome">
    <circle cx="18" cy="18" r="18" fill="#2d9d4e"/>
    <path d="M18 0a18 18 0 0 1 15.600 9H18a9 9 0 0 0-8 5L3 5A18 18 0 0 1 18 0z" fill="#ea4335"/>
    <path d="M33.600 9A18 18 0 0 1 18 36l7-14a9 9 0 0 0-1-13z" fill="#fbc116"/>
    <circle cx="18" cy="18" r="9" fill="#fff"/><circle cx="18" cy="18" r="7" fill="#3a86ee"/>
  </g>
</defs></svg>
</body>
</html>
```

FILE: styles.css
```css
* { box-sizing: border-box; }
html, body { margin: 0; padding: 0; }
body { font-family: "Open Sans", "Noto Sans", sans-serif; width: 1920px; height: 1080px; overflow: hidden; background: #f3f2f1; color: #252423; }
svg { display: block; flex: none; }
.defs { position: absolute; }
.app { position: relative; display: flex; flex-direction: column; width: 1920px; height: 1080px; }

/* title bar */
.titlebar { position: relative; flex: none; height: 51px; background: #3b3a39; display: flex; align-items: center; color: #fff; }
.tb-left { width: 896px; display: flex; align-items: center; padding-left: 25px; }
.tb-save { margin-top: 0; }
.wl { fill: none; stroke: #dcdcdc; stroke-width: 1.600; }
.dim { fill: none; stroke: #6f6e6d; stroke-width: 1.600; }
.tb-undo { margin-left: 21px; }
.tb-redo { margin-left: 24px; }
.tb-title { margin-left: 13px; margin-top: 7px; font-size: 16.850px; letter-spacing: .05px; white-space: nowrap; }
.tb-caret { margin-left: 10px; margin-top: 0; }
.tb-search { width: 600px; height: 36px; background: #d2d2cf; border-radius: 2px; display: flex; align-items: center; padding-left: 25px; gap: 14px; color: #1f5a50; font-size: 20px; margin-top: 1px; }
.tb-search span { margin-top: 2px; }
.dk { fill: none; stroke: #333; stroke-width: 1.500; }
.tb-right { flex: 1; display: flex; align-items: center; padding-left: 104px; }
.tb-sign { font-size: 17px; width: 69px; margin-top: -1px; }
.tb-avatar { margin-top: -2px; }
.tb-min { margin-left: 47px; }
.tb-rest { margin-left: 50px; }
.tb-close { margin-left: 50px; }
.topstrip { position: absolute; left: 780px; top: 0; width: 361px; height: 2px; background: #e8e6e4; }
.topstrip span { display: block; margin-left: 143px; width: 72px; height: 2px; background: #8b83d0; }

/* ribbon */
.ribbon { flex: none; height: 189px; background: #fcfcfc; }
.tabs { height: 54px; display: flex; align-items: flex-start; padding-left: 34px; gap: 47.500px; }
.tab { height: 47px; line-height: 48px; font-size: 20px; color: #252423; }
.tab.home { margin-left: 9px; border-bottom: 5px solid #117865; font-weight: 600; }
.share { margin: 6px 8px 0 auto; width: 125px; height: 36px; background: #117865; border: 0; border-radius: 5px; color: #fff; font: 17px "Open Sans", sans-serif; display: flex; align-items: center; padding: 0 6px 0 9px; gap: 10px; }
.share span { margin-left: 3px; }
.groups { display: flex; height: 132px; position: relative; }
.rgroup { display: flex; flex-direction: column; height: 132px; border-right: 1px solid #e1dfdd; flex: none; }
.g-clip { width: 240px; }
.g-data { width: 550px; }
.g-query { width: 173px; }
.g-insert { width: 220px; }
.g-calc { width: 170px; }
.g-sens { width: 109px; }
.g-share { width: 88px; }
.g-copilot { width: 88px; }
.rrow { flex: 1; display: flex; padding-top: 7px; justify-content: center; min-height: 0; }
.g-clip .rrow { justify-content: flex-start; padding-left: 8px; }
.g-data .rrow { padding-left: 6px; justify-content: flex-start; }
.g-query .rrow { padding-left: 10px; justify-content: flex-start; }
.g-insert .rrow { padding-left: 12px; justify-content: flex-start; }
.g-calc .rrow { padding-left: 11px; justify-content: flex-start; }
.rb { display: flex; flex-direction: column; align-items: center; flex: none; }
.rb svg { overflow: visible; }
.rl { font-size: 16.500px; line-height: 25px; height: 25px; color: #323130; white-space: nowrap; display: flex; align-items: center; }
.rl svg.chev { margin-left: 4px; margin-top: 3px; }
.w-paste { width: 68px; }
.w-paste svg { margin-left: 5px; }
.w70 { width: 70px; } .w78 { width: 78px; } .w100 { width: 100px; } .w54 { width: 54px; } .w66 { width: 66px; } .w76 { width: 76px; } .w90 { width: 90px; } .w86 { width: 86px; } .w64 { width: 64px; } .w60 { width: 60px; } .w73 { width: 73px; }
.w-full { width: 100%; }
.dis .rl, .dis span { color: #c8c6c4; }
.clip-col { display: flex; flex-direction: column; margin-top: -7px; margin-left: 2px; }
.clip-item { height: 36px; display: flex; align-items: center; gap: 5px; font-size: 16.500px; white-space: nowrap; }
.glabel { height: 17px; line-height: 20px; text-align: center; font-size: 14.500px; color: #484644; }
.ro { fill: #fff; stroke: #444; stroke-width: 1.500; }
.rg { fill: #fff; stroke: #777; stroke-width: 1.500; }
.ro1 { fill: none; stroke: #777; stroke-width: 1.200; }
.keys { fill: #333; }
.xl { font: 700 17px "Open Sans", sans-serif; fill: #fff; text-anchor: middle; }
.tbx { font: 400 30px "Open Sans", sans-serif; fill: #2c8ad1; text-anchor: middle; }
.collapse { margin-left: auto; margin-top: 117px; padding-right: 8px; }

/* main */
.main { flex: none; height: 745px; display: flex; border-top: 1px solid #dcdcdc; margin-top: -1px; }
.rail { flex: none; width: 61px; border-right: 1px solid #dddbd9; padding-top: 0; background: #f3f2f1; }
.rail-item { height: 59px; display: flex; align-items: center; justify-content: center; }
.rail-item.on { height: 60px; border-left: 4px solid #117865; padding-right: 4px; }
.daxt { font: 700 10.500px "Liberation Sans", sans-serif; fill: #808080; }
.center { flex: none; width: 1318px; display: flex; flex-direction: column; }
.canvas-row { flex: none; height: 691px; display: flex; }
.canvas { position: relative; flex: none; width: 1269px; height: 691px; background: linear-gradient(112deg, #4b4595 0%, #4d4696 15%, #6a4da8 50%, #9b57c7 100%); overflow: hidden; }
.guide { position: absolute; left: 28px; top: 0; width: 1212px; height: 682px; border: 3px dotted #60605f; border-top: 0; }

.v-header { position: absolute; left: 31px; top: 0; width: 1204px; height: 60px; background: #b8a2c4; border-right: 2px solid #4b4b4b; border-bottom: 2px solid #4b4b4b; border-left: 1px solid #8d7d9c; display: flex; align-items: center; justify-content: center; }
.v-header h1 { margin: -2px 0 0 -4px; font: 400 31px "Lato", sans-serif; letter-spacing: .85px; color: #111; }
.v-back { position: absolute; left: 30px; top: 0; width: 47px; height: 39px; background: #fff; padding: 3px 0 0 3px; }
.v-plane { position: absolute; top: 5px; width: 48px; height: 51px; background: #fff; display: flex; flex-direction: column; align-items: center; padding-top: 6px; }
.v-plane i { display: block; width: 22px; height: 1px; background: #bbb; margin-top: 5px; }
.p1 { left: 271px; } .p2 { left: 951.500px; }
.plane { fill: #fff; stroke: #555; stroke-width: .7; }

.v-card { position: absolute; background: #fbfafd; border: 1px solid #333; border-radius: 26px; padding-left: 12px; padding-right: 3px; }
.c1 { left: 77px; top: 61px; width: 167px; height: 96px; }
.c2 { left: 356px; top: 57px; width: 190px; height: 100px; }
.c3 { left: 641px; top: 61px; width: 197px; height: 97px; }
.c4 { left: 942px; top: 61px; width: 201px; height: 99px; }
.c-label { font: 400 15.500px "Roboto", sans-serif; letter-spacing: .13px; line-height: 18px; margin-top: 7px; color: #252423; white-space: nowrap; }
.c-value { font: italic 700 50px "Open Sans", sans-serif; line-height: 52px; margin-top: 8px; color: #666; text-align: center; }
.c-up { margin-top: 10px; }

.v-chart { position: absolute; background: #fbf9fe; }
.ch-a { left: 54px; top: 169px; width: 249px; height: 194px; }
.ch-b { left: 321px; top: 177px; width: 299px; height: 186px; }
.ch-c { left: 633px; top: 186px; width: 246px; height: 177px; }
.ch-d { left: 892.500px; top: 196px; width: 345.500px; height: 167px; }
.ch-e { left: 47px; top: 373px; width: 1187px; height: 143px; border-bottom: 2px solid #b294d0; border-left: 1px solid #b294d0; }
.v-title { position: relative; z-index: 1; padding: 2px 0 0 5px; font: 400 15.600px/18px "Roboto", sans-serif; color: #252423; white-space: nowrap; }
.v-title.wrap { white-space: normal; padding-right: 5px; font-size: 15.860px; }
.chart-svg { position: absolute; left: 0; top: 0; }
.ch-e .chart-svg { left: -1px; }
.grid { fill: none; stroke: #d8d6dc; stroke-width: 1; stroke-dasharray: 1 2; }
.bars rect { fill: #b9a3c5; stroke: #333; stroke-width: 1; }
.t-axis { font: 10px "Liberation Sans", sans-serif; fill: #444; letter-spacing: .4px; }
.t-axis2 { font: 10.500px "Roboto", sans-serif; fill: #444; }
.t-tick { font: 11.500px "Roboto", sans-serif; fill: #666; }
.t-age text { font: 12px "Roboto", sans-serif; fill: #fd8b7a; text-anchor: middle; }
.t-lab { font: 11px "Roboto", sans-serif; fill: #666; }
.t-leg { font: 700 12.400px "Roboto", sans-serif; fill: #444; }
.t-ent { font: 12.700px "Roboto", sans-serif; fill: #666; }
.leader { fill: none; stroke: #b8b8b8; stroke-width: 1; }
.t-el { font: 700 11px "Lato", sans-serif; letter-spacing: .75px; fill: #333; }
.t-val text { font: 10.500px "Roboto", sans-serif; fill: #666; text-anchor: middle; }

.v-text { position: absolute; left: 29.500px; top: 517px; width: 1206px; height: 162px; background: #fbf9fd; border-top: 2px solid #b294d0; padding: 3px 0 0 16px; }
.v-text p { margin: 0 0 15px; height: 30px; line-height: 30px; font-size: 20px; white-space: nowrap; display: flex; }
.v-text b { color: #333; width: 8px; font-size: 16px; }
.v-text em { font: italic 700 21px/30px "Lato", sans-serif; letter-spacing: .6px; word-spacing: 3px; color: #4a47a6; }

.filters { flex: none; width: 49px; height: 691px; background: #9357c3; border-left: 1px solid #c9a8e2; display: flex; flex-direction: column; align-items: center; padding-top: 22px; color: #fff; }
.f-ic { margin-top: 22px; }
.f-text { writing-mode: vertical-rl; margin-top: 10px; margin-left: -3px; font: 700 21px "Open Sans", sans-serif; }

/* page tabs */
.pagebar { flex: 1; display: flex; background: #f3f2f1; }
.pb-icons { position: relative; width: 192px; height: 54px; border-right: 1px solid #c8c6c4; display: flex; align-items: flex-start; }
.pb-desk { margin: 12px 0 0 15px; height: 35px; width: 36px; border-bottom: 0; display: flex; justify-content: center; position: relative; }
.pb-desk::after { content: ""; position: absolute; left: 0; top: 31px; width: 36px; height: 4px; border-radius: 2px; background: #117865; }
.pb-phone { margin: 8px 0 0 39px; }
.pb-arr { margin: 20px 0 0 32px; }
.pb-arr2 { margin: 20px 0 0 25px; }
.pb-tab { width: 113px; height: 54px; background: #fff; border-bottom: 6px solid #117865; text-align: center; font-size: 17px; line-height: 56px; color: #252423; }
.pb-add { width: 59px; height: 54px; background: #117865; color: #fff; font: 700 30px/50px "Open Sans", sans-serif; text-align: center; }

/* panes */
.viz { position: relative; flex: none; width: 271px; background: #f3f2f1; border-right: 1px solid #dedcda; }
.data { flex: 1; min-width: 0; background: #f3f2f1; }
.pane-head { height: 60px; display: flex; align-items: center; justify-content: space-between; padding: 0 12px 0 12px; }
.pane-head h2 { margin: -2px 0 0; font: 500 23px "Noto Sans", sans-serif; color: #252423; }
.pane-head.dh { padding: 0 11px 0 13px; }
.bv { height: 18px; line-height: 18px; padding-left: 12px; font-size: 16.500px; color: #252423; }
.bv-tabs { height: 48px; margin-top: 8px; padding-left: 12px; display: flex; align-items: center; }
.bv-sel { width: 48px; height: 48px; background: #d2d2d0; border-radius: 3px; padding: 6px 0 0 5px; }
.bv-fmt { margin-left: 57px; margin-top: -3px; }
.notch { height: 13px; margin-top: 7px; border-bottom: 1px solid #8a8a8a; position: relative; padding-left: 23px; }
.notch svg { position: absolute; top: 0; }
.viz-grid { display: grid; grid-template-columns: repeat(6, 42px); grid-auto-rows: 41.800px; padding: 16px 0 0 16px; }
.vi { width: 28px; height: 28px; overflow: visible; }
.o { fill: none; stroke: #444; stroke-width: 1.300; }
.w { fill: #fff; stroke: #444; stroke-width: 1.200; }
.b { fill: #6db0ea; stroke: #2b7cc4; stroke-width: 1.200; }
.g { fill: #b8b8b8; stroke: #777; stroke-width: 1.200; }
.th { fill: none; stroke: #333; stroke-width: 1.200; }
.thb { fill: none; stroke: #2b7cc4; stroke-width: 1.400; }
.n123 { font: 400 13.500px "Roboto", sans-serif; fill: #2b8ad0; text-anchor: middle; }
.rlet { font: 700 23px "Roboto", sans-serif; fill: #2b7cc4; text-anchor: middle; }
.py { font: 700 25px "Roboto", sans-serif; fill: #2b7cc4; }
.dots { padding-left: 19px; font-size: 18px; font-weight: 700; line-height: 18px; margin-top: 0; color: #333; height: 28px; }
.wells { position: absolute; left: 0; right: 0; top: 505px; bottom: 0; border-top: 2px solid #e1dfdd; padding-top: 14px; overflow: hidden; }
.w-label { padding-left: 18px; font-size: 16.500px; line-height: 20px; color: #484644; }
.w-box { margin: 10px 0 0 6px; width: 255px; height: 41px; background: #fff; border: 1px dashed #c8c6c4; line-height: 38px; padding-left: 15px; font-size: 16.500px; color: #484644; }
.w-head { margin-top: 19px; padding-left: 18px; font-size: 16.500px; font-weight: 600; line-height: 20px; color: #484644; }
.w-row { margin-top: 17px; height: 20px; padding: 0 33px 0 18px; display: flex; justify-content: space-between; align-items: center; font-size: 16.500px; color: #484644; }
.w-row.r2 { margin-top: 19px; }
.tog { width: 48px; height: 24px; border-radius: 12px; display: flex; align-items: center; font-size: 14px; flex: none; }
.tog i { width: 12px; height: 12px; border-radius: 50%; display: block; }
.tog.off { background: #fff; border: 1px solid #888; padding-left: 6px; gap: 3px; color: #605e5c; }
.tog.off i { background: #605e5c; }
.tog.on { background: #117865; color: #fff; padding-left: 6px; gap: 4px; font-weight: 600; }
.tog.on i { background: #fff; }
.w-box2 { margin: 17px 0 0 6px; width: 255px; height: 20px; border: 1px dashed #c8c6c4; border-bottom: 0; background: #fff; }
.w-scroll { position: absolute; right: 0; top: 4px; width: 9px; height: 162px; border-radius: 5px; background: #d0d0ce; }

.d-search { margin: 8px 7px 0 7px; height: 36px; background: #fff; border: 1px solid #c8c6c4; border-bottom: 2px solid #a19f9d; border-radius: 4px; display: flex; align-items: center; padding-left: 18px; gap: 10px; font-size: 19px; color: #666; }
.d-search span { margin-top: 1px; }
.d-tree { margin-top: 23px; padding-left: 25px; height: 18px; display: flex; align-items: center; font-size: 16.500px; color: #484644; }
.d-tree svg + svg { margin-left: 10px; }
.d-tree span { margin-left: 8px; }

/* status */
.status { flex: none; height: 35px; background: #f3f2f1; border-top: 1px solid #e1dfdd; border-bottom: 1px solid #111; display: flex; align-items: center; justify-content: space-between; font-size: 17.200px; color: #605e5c; padding-left: 6px; }
.st-page { margin-top: 2px; }
.st-right { display: flex; align-items: center; }
.st-minus { width: 8px; height: 2px; background: #605e5c; margin-right: 6px; }
.slider { position: relative; width: 150px; height: 1px; background: #605e5c; }
.thumb { position: absolute; left: 41px; top: -8px; width: 6px; height: 16px; background: #605e5c; }
.tick { position: absolute; left: 75px; top: -3px; width: 2px; height: 7px; background: #605e5c; }
.st-plus { margin-left: 7px; font-size: 21px; font-weight: 600; line-height: 20px; }
.st-zoom { margin-left: 20px; width: 63px; }
.st-upd { margin-left: 21px; margin-right: 7px; margin-top: 2px; }

/* taskbar */
.taskbar { flex: none; height: 60px; display: flex; align-items: center; background: linear-gradient(90deg, #e6e6ea 0%, #dfe3ea 30%, #e2e2e6 55%, #e8e2dc 70%, #f2e6da 88%, #e6e0dc 100%); }
.win { width: 74px; padding-left: 25px; }
.tsearch { width: 429px; height: 58px; background: #fff; border: 2px solid #cfcfcf; display: flex; align-items: center; padding-left: 14px; font-size: 21.300px; color: #1b1b1b; }
.tsearch span { margin-left: 17px; margin-top: 3px; }
.ts-art { margin-left: auto; margin-right: 12px; margin-top: 4px; }
.tslots { display: flex; height: 60px; }
.slot { position: relative; width: 75.200px; height: 60px; display: flex; align-items: center; justify-content: center; }
.slot.open::after { content: ""; position: absolute; left: 7px; right: 7px; bottom: 0; height: 3px; background: #8b8bd2; }
.slot.act { background: #f4f2f3; }
.slot.act::after { left: 0; right: 0; }
.ol { font: 700 15px "Open Sans", sans-serif; fill: #fff; text-anchor: middle; }
.tA { font: 700 14px "Open Sans", sans-serif; fill: #e0d8d8; text-anchor: middle; }
.wn { font: 400 12px "Roboto", sans-serif; fill: #fff; text-anchor: middle; }
.tray { flex: 1; display: flex; align-items: center; padding-left: 116px; color: #1b1b1b; }
.weather { display: flex; align-items: center; gap: 11px; font-size: 20px; }
.weather span { margin-top: 3px; }
.tr-chev { margin-left: 45px; }
.tr-pen { margin-left: 29px; }
.tr-eng { margin-left: 30px; font-size: 17px; }
.clock { width: 110px; margin-left: 11px; display: flex; flex-direction: column; align-items: center; font-size: 16.500px; line-height: 29px; }
.tr-note { margin-left: 24px; }
```
